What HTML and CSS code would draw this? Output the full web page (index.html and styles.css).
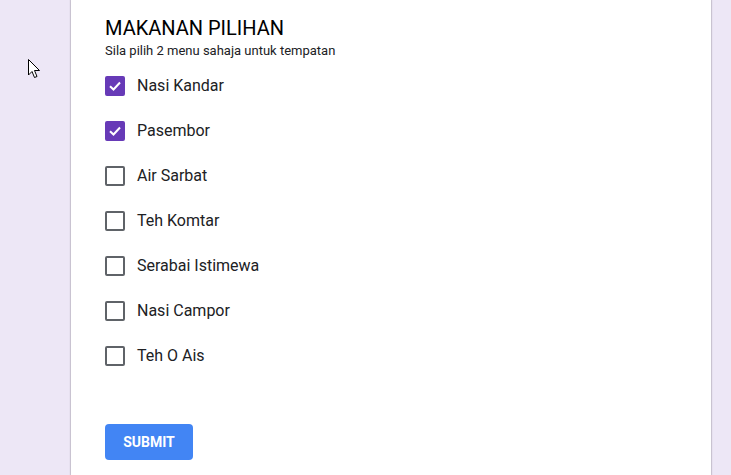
FILE: index.html
```html
<!DOCTYPE html>
<html>
<head>
<meta charset="utf-8">
<link rel="stylesheet" href="styles.css">
</head>
<body>
<div class="page">
  <div class="gutter">
    <svg class="cursor" width="13" height="20" viewBox="0 0 13 20"><path d="M0.5 0.5 L0.5 16 L4 12.5 L6.5 18.5 L9 17.5 L6.5 11.5 L11.5 11.5 Z" fill="#fff" stroke="#000" stroke-width="1"/></svg>
  </div>
  <div class="card">
    <h1 class="title">MAKANAN PILIHAN</h1>
    <p class="desc">Sila pilih 2 menu sahaja untuk tempatan</p>
    <div class="options">
      <label class="opt"><span class="box checked"><svg width="14" height="14" viewBox="0 0 14 14"><path d="M2 7.2 L5.5 10.5 L12 3.5" fill="none" stroke="#fff" stroke-width="2"/></svg></span><span class="lbl">Nasi Kandar</span></label>
      <label class="opt"><span class="box checked"><svg width="14" height="14" viewBox="0 0 14 14"><path d="M2 7.2 L5.5 10.5 L12 3.5" fill="none" stroke="#fff" stroke-width="2"/></svg></span><span class="lbl">Pasembor</span></label>
      <label class="opt"><span class="box"></span><span class="lbl">Air Sarbat</span></label>
      <label class="opt"><span class="box"></span><span class="lbl">Teh Komtar</span></label>
      <label class="opt"><span class="box"></span><span class="lbl">Serabai Istimewa</span></label>
      <label class="opt"><span class="box"></span><span class="lbl">Nasi Campor</span></label>
      <label class="opt"><span class="box"></span><span class="lbl">Teh O Ais</span></label>
    </div>
    <button class="submit">SUBMIT</button>
  </div>
</div>
</body>
</html>
```

FILE: styles.css
```css
html, body {
  margin: 0;
  padding: 0;
  height: 100%;
  background: #ede7f6;
  font-family: Roboto, "Liberation Sans", sans-serif;
  overflow: hidden;
}
.page {
  display: flex;
  height: 475px;
}
.gutter {
  width: 71px;
  flex: none;
  position: relative;
}
.cursor {
  position: absolute;
  left: 28px;
  top: 59px;
}
.card {
  width: 640px;
  flex: none;
  background: #fff;
  box-shadow: -1px 0 1px rgba(0,0,0,0.12), 1px 0 1px rgba(0,0,0,0.12), 0 0 2px rgba(0,0,0,0.1);
  padding: 16px 34px 0;
  box-sizing: border-box;
}
.title {
  margin: 0;
  font-size: 20px;
  font-weight: 400;
  line-height: 24px;
  color: #000;
}
.desc {
  margin: 3px 0 0;
  font-size: 13px;
  line-height: 16px;
  color: #202124;
}
.options {
  margin-top: 4px;
  display: flex;
  flex-direction: column;
}
.opt {
  display: flex;
  align-items: center;
  height: 45px;
}
.box {
  width: 16px;
  height: 16px;
  border: 2px solid #5f6368;
  border-radius: 2px;
  display: flex;
  align-items: center;
  justify-content: center;
  flex: none;
}
.box.checked {
  background: #673ab7;
  border-color: #673ab7;
}
.lbl {
  margin-left: 12px;
  font-size: 16px;
  color: #202124;
}
.submit {
  margin-top: 46px;
  width: 88px;
  height: 36px;
  background: #4285f4;
  border: none;
  border-radius: 4px;
  color: #fff;
  font-family: Roboto, "Liberation Sans", sans-serif;
  font-weight: 700;
  font-size: 14px;
  padding: 0;
}
```
